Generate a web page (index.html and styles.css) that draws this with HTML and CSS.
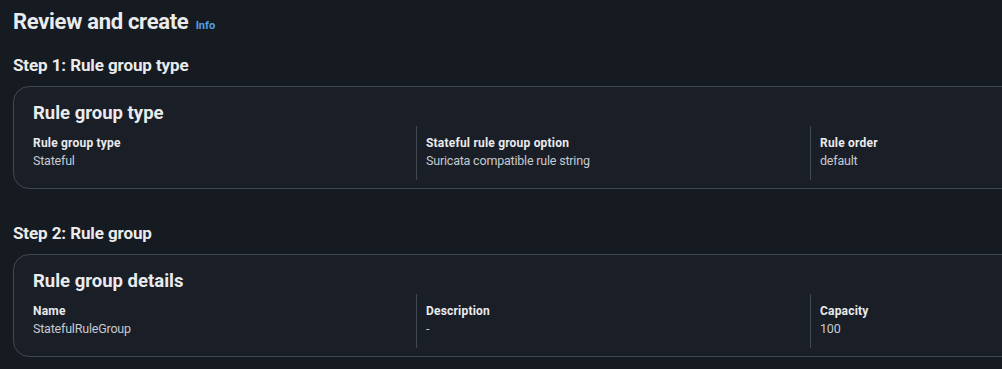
FILE: index.html
```html
<!DOCTYPE html>
<html lang="en">
    <head>
        <meta charset="UTF-8" />
        <meta name="viewport" content="width=device-width, initial-scale=1.0" />
        <title>Review and create</title>
        <link rel="stylesheet" href="styles.css">
    </head>

    <body>
        <div class="page">
            <h1 class="page-title">Review and create <a class="info-link" href="#">Info</a></h1>

            <h2 class="step-title">Step 1: Rule group type</h2>
            <div class="card">
                <h3 class="card-title">Rule group type</h3>
                <div class="kv-grid">
                    <div class="kv-col">
                        <div class="kv-label">Rule group type</div>
                        <div class="kv-value">Stateful</div>
                    </div>
                    <div class="kv-col">
                        <div class="kv-label">Stateful rule group option</div>
                        <div class="kv-value">Suricata compatible rule string</div>
                    </div>
                    <div class="kv-col">
                        <div class="kv-label">Rule order</div>
                        <div class="kv-value">default</div>
                    </div>
                </div>
            </div>

            <h2 class="step-title step-next">Step 2: Rule group</h2>
            <div class="card">
                <h3 class="card-title">Rule group details</h3>
                <div class="kv-grid">
                    <div class="kv-col">
                        <div class="kv-label">Name</div>
                        <div class="kv-value">StatefulRuleGroup</div>
                    </div>
                    <div class="kv-col">
                        <div class="kv-label">Description</div>
                        <div class="kv-value">-</div>
                    </div>
                    <div class="kv-col">
                        <div class="kv-label">Capacity</div>
                        <div class="kv-value">100</div>
                    </div>
                </div>
            </div>
        </div>
    </body>
</html>
```

FILE: styles.css
```css
html, body {
    margin: 0;
    background-color: #161b22;
    overflow: hidden;
}

.page {
    padding: 8px 0 0 13px;
    font-family: Roboto, 'Open Sans', sans-serif;
    color: #e9ebed;
}

.page-title {
    margin: 0;
    font-size: 22px;
    line-height: 28px;
    font-weight: 700;
    letter-spacing: -0.3px;
}

.info-link {
    color: #539fe5;
    font-size: 11px;
    font-weight: 700;
    text-decoration: none;
    letter-spacing: 0;
    margin-left: 2px;
}

.step-title {
    margin: 15px 0 11px;
    font-size: 17px;
    line-height: 20px;
    font-weight: 700;
    letter-spacing: -0.1px;
}

.step-next {
    margin-top: 34px;
}

.card {
    width: 1200px;
    box-sizing: border-box;
    border: 1px solid #424852;
    border-radius: 16px;
    background-color: #1a1e27;
    padding: 15px 19px 8px;
}

.card-title {
    margin: 0 0 2px;
    font-size: 18.5px;
    line-height: 22px;
    font-weight: 700;
}

.kv-grid {
    display: grid;
    grid-template-columns: 383px 394px 394px;
}

.kv-col {
    padding: 8px 0 10px;
}

.kv-col + .kv-col {
    border-left: 1px solid #424852;
    padding-left: 9px;
}

.kv-label {
    font-size: 12px;
    line-height: 18px;
    font-weight: 700;
    color: #e9ebed;
    letter-spacing: 0.2px;
}

.kv-value {
    font-size: 12.5px;
    line-height: 18px;
    color: #c6cad1;
    letter-spacing: -0.2px;
}
```
